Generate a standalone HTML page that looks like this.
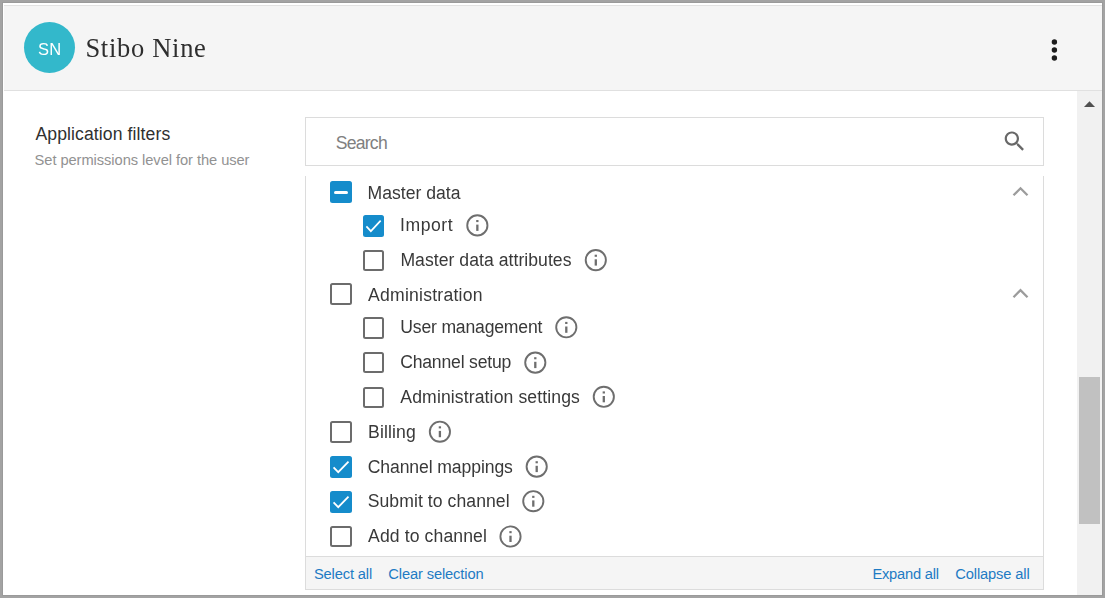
<!DOCTYPE html>
<html lang="en"><head><meta charset="utf-8"><title>Stibo Nine</title>
<style>
html,body{margin:0;padding:0;}
body{width:1105px;height:598px;overflow:hidden;background:#a3a3a3;position:relative;font-family:"Liberation Sans",sans-serif;}
.abs{position:absolute;}
.t{position:absolute;white-space:nowrap;line-height:24px;height:24px;}
#win{left:3px;top:3px;width:1099px;height:592px;background:#fff;overflow:hidden;box-shadow:0 0 0 1px #9a9a9a;}
#hdr{left:1px;top:2px;width:1098px;height:84px;background:#f5f5f5;border-top:1px solid #e2e2e2;border-bottom:1px solid #e0e0e0;}
#avatar{left:21px;top:19px;width:51px;height:51px;border-radius:50%;background:#33b8cb;}
.cb{position:absolute;box-sizing:border-box;border-radius:2.5px;}
.cb.off{border:2px solid #6c6c6c;background:#fff;}
.cb.on,.cb.ind{background:#158ccb;}
</style></head>
<body>
<div id="win" class="abs">
<div id="hdr" class="abs"></div>
<div id="avatar" class="abs"></div>
<svg class="abs" style="left:1045px;top:33px;" width="14" height="28" viewBox="0 0 14 28"><g fill="#1c1c1c"><circle cx="6.4" cy="6" r="2.7"/><circle cx="6.4" cy="13.95" r="2.7"/><circle cx="6.4" cy="22" r="2.7"/></g></svg>
<div class="abs" style="left:1074px;top:88px;width:25px;height:504px;background:#f1f1f1;"></div>
<svg class="abs" style="left:1074px;top:88px;" width="25" height="25" viewBox="0 0 25 25"><path d="M7 16 L12.5 10.3 L18 16 Z" fill="#505050"/></svg>
<div class="abs" style="left:1076px;top:374px;width:21px;height:147px;background:#c1c1c1;"></div>
<span class="t" id="appf" style='left:32.42px;top:119px;font-size:17.6px;color:#303030;letter-spacing:0.102px;'>Application filters</span>
<span class="t" id="setp" style='left:31.56px;top:145px;font-size:14.7px;color:#929292;letter-spacing:-0.066px;'>Set permissions level for the user</span>
<div class="abs" style="left:302px;top:114px;width:739px;height:49px;box-sizing:border-box;border:1px solid #dcdcdc;background:#fff;"></div>
<span class="t" id="search" style='left:332.65px;top:128px;font-size:17.6px;color:#808080;letter-spacing:-0.745px;'>Search</span>
<svg class="abs" style="left:998px;top:125px;" width="28" height="28" viewBox="0 0 28 28"><g transform="translate(0.4 0.1) scale(1.1)"><path fill="#686868" d="M15.5 14h-.79l-.28-.27C15.41 12.59 16 11.11 16 9.5 16 5.91 13.09 3 9.5 3S3 5.91 3 9.5 5.91 16 9.5 16c1.61 0 3.09-.59 4.23-1.57l.27.28v.79l5 4.99L20.49 19l-4.99-5zm-6 0C7.01 14 5 11.99 5 9.5S7.01 5 9.5 5 14 7.01 14 9.5 11.99 14 9.5 14z"/></g></svg>
<div class="abs" style="left:302px;top:173px;width:739px;height:414px;box-sizing:border-box;border-left:1px solid #dcdcdc;border-right:1px solid #dcdcdc;border-bottom:1px solid #dcdcdc;"></div>
<div class="abs" style="left:302px;top:553px;width:739px;height:34px;box-sizing:border-box;border:1px solid #dcdcdc;background:#f5f5f5;"></div>
<span class="t" id="lk0" style='left:310.98px;top:559px;font-size:14.7px;color:#1e7bc4;letter-spacing:-0.158px;'>Select all</span>
<span class="t" id="lk1" style='left:385.30px;top:559px;font-size:14.7px;color:#1e7bc4;letter-spacing:-0.131px;'>Clear selection</span>
<span class="t" id="lk2" style='left:869.38px;top:559px;font-size:14.7px;color:#1e7bc4;letter-spacing:-0.210px;'>Expand all</span>
<span class="t" id="lk3" style='left:952.34px;top:559px;font-size:14.7px;color:#1e7bc4;letter-spacing:-0.143px;'>Collapse all</span>
<div class="cb ind" style="left:327px;top:178px;width:22px;height:22px;"><div style="position:absolute;left:3.8px;top:10.1px;width:14.4px;height:3px;background:#fff;border-radius:1.5px"></div></div>
<svg class="abs" style="left:1006px;top:181px;" width="22" height="16" viewBox="0 0 22 16"><path d="M4.50 11.30 L11.50 4.30 L18.50 11.30" fill="none" stroke="#9c9c9c" stroke-width="2.3"/></svg>
<div class="cb on" style="left:360px;top:212px;width:21px;height:22px;"><svg width="21" height="22" viewBox="0 0 22 22" preserveAspectRatio="none" style="display:block"><path d="M3.56 11.35 L8.24 16.2 L18.5 5.7" fill="none" stroke="#fff" stroke-width="1.8"/></svg></div>
<svg class="abs" style="left:461px;top:209px;" width="26" height="26" viewBox="0 0 26 26"><g transform="translate(13.35 13.40)" fill="#6e6e6e"><circle r="10.1" fill="none" stroke="#6e6e6e" stroke-width="1.9"/><rect x="-1.15" y="-5.4" width="2.3" height="2.1"/><rect x="-1.15" y="-0.8" width="2.3" height="6.3"/></g></svg>
<div class="cb off" style="left:360px;top:247px;width:21px;height:21px;"></div>
<svg class="abs" style="left:579px;top:244px;" width="26" height="26" viewBox="0 0 26 26"><g transform="translate(13.80 13.10)" fill="#6e6e6e"><circle r="10.1" fill="none" stroke="#6e6e6e" stroke-width="1.9"/><rect x="-1.15" y="-5.4" width="2.3" height="2.1"/><rect x="-1.15" y="-0.8" width="2.3" height="6.3"/></g></svg>
<div class="cb off" style="left:327px;top:280px;width:22px;height:22px;"></div>
<svg class="abs" style="left:1006px;top:283px;" width="22" height="16" viewBox="0 0 22 16"><path d="M4.50 11.20 L11.50 4.20 L18.50 11.20" fill="none" stroke="#9c9c9c" stroke-width="2.3"/></svg>
<div class="cb off" style="left:360px;top:314px;width:21px;height:22px;"></div>
<svg class="abs" style="left:550px;top:311px;" width="26" height="26" viewBox="0 0 26 26"><g transform="translate(13.30 13.30)" fill="#6e6e6e"><circle r="10.1" fill="none" stroke="#6e6e6e" stroke-width="1.9"/><rect x="-1.15" y="-5.4" width="2.3" height="2.1"/><rect x="-1.15" y="-0.8" width="2.3" height="6.3"/></g></svg>
<div class="cb off" style="left:360px;top:349px;width:21px;height:21px;"></div>
<svg class="abs" style="left:519px;top:346px;" width="26" height="26" viewBox="0 0 26 26"><g transform="translate(13.30 13.60)" fill="#6e6e6e"><circle r="10.1" fill="none" stroke="#6e6e6e" stroke-width="1.9"/><rect x="-1.15" y="-5.4" width="2.3" height="2.1"/><rect x="-1.15" y="-0.8" width="2.3" height="6.3"/></g></svg>
<div class="cb off" style="left:360px;top:384px;width:21px;height:21px;"></div>
<svg class="abs" style="left:587px;top:380px;" width="26" height="26" viewBox="0 0 26 26"><g transform="translate(13.80 13.80)" fill="#6e6e6e"><circle r="10.1" fill="none" stroke="#6e6e6e" stroke-width="1.9"/><rect x="-1.15" y="-5.4" width="2.3" height="2.1"/><rect x="-1.15" y="-0.8" width="2.3" height="6.3"/></g></svg>
<div class="cb off" style="left:327px;top:418px;width:22px;height:22px;"></div>
<svg class="abs" style="left:423px;top:415px;" width="26" height="26" viewBox="0 0 26 26"><g transform="translate(13.90 13.70)" fill="#6e6e6e"><circle r="10.1" fill="none" stroke="#6e6e6e" stroke-width="1.9"/><rect x="-1.15" y="-5.4" width="2.3" height="2.1"/><rect x="-1.15" y="-0.8" width="2.3" height="6.3"/></g></svg>
<div class="cb on" style="left:327px;top:453px;width:22px;height:22px;"><svg width="22" height="22" viewBox="0 0 22 22" preserveAspectRatio="none" style="display:block"><path d="M3.56 11.35 L8.24 16.2 L18.5 5.7" fill="none" stroke="#fff" stroke-width="1.8"/></svg></div>
<svg class="abs" style="left:520px;top:450px;" width="26" height="26" viewBox="0 0 26 26"><g transform="translate(13.70 13.60)" fill="#6e6e6e"><circle r="10.1" fill="none" stroke="#6e6e6e" stroke-width="1.9"/><rect x="-1.15" y="-5.4" width="2.3" height="2.1"/><rect x="-1.15" y="-0.8" width="2.3" height="6.3"/></g></svg>
<div class="cb on" style="left:327px;top:488px;width:22px;height:22px;"><svg width="22" height="22" viewBox="0 0 22 22" preserveAspectRatio="none" style="display:block"><path d="M3.56 11.35 L8.24 16.2 L18.5 5.7" fill="none" stroke="#fff" stroke-width="1.8"/></svg></div>
<svg class="abs" style="left:517px;top:485px;" width="26" height="26" viewBox="0 0 26 26"><g transform="translate(13.30 13.20)" fill="#6e6e6e"><circle r="10.1" fill="none" stroke="#6e6e6e" stroke-width="1.9"/><rect x="-1.15" y="-5.4" width="2.3" height="2.1"/><rect x="-1.15" y="-0.8" width="2.3" height="6.3"/></g></svg>
<div class="cb off" style="left:327px;top:523px;width:22px;height:21px;"></div>
<svg class="abs" style="left:494px;top:520px;" width="26" height="26" viewBox="0 0 26 26"><g transform="translate(13.50 13.50)" fill="#6e6e6e"><circle r="10.1" fill="none" stroke="#6e6e6e" stroke-width="1.9"/><rect x="-1.15" y="-5.4" width="2.3" height="2.1"/><rect x="-1.15" y="-0.8" width="2.3" height="6.3"/></g></svg>
<div class="abs" id="gl" style="left:0;top:0;width:1099px;height:592px;will-change:transform;">
<span class="t" id="sn" style='left:34.93px;top:34px;font-size:16.5px;color:#fff;letter-spacing:0.269px;'>SN</span>
<span class="t" id="title" style='left:82.38px;top:33px;font-size:26.5px;color:#2e2e2e;letter-spacing:0.710px;font-family:"Liberation Serif",serif;'>Stibo Nine</span>
<span class="t" id="r0" style='left:364.62px;top:178px;font-size:17.6px;color:#393939;letter-spacing:0.004px;'>Master data</span>
<span class="t" id="r1" style='left:397.10px;top:210px;font-size:17.6px;color:#393939;letter-spacing:0.536px;'>Import</span>
<span class="t" id="r2" style='left:397.38px;top:245px;font-size:17.6px;color:#393939;letter-spacing:0.044px;'>Master data attributes</span>
<span class="t" id="r3" style='left:365.07px;top:280px;font-size:17.6px;color:#393939;letter-spacing:0.230px;'>Administration</span>
<span class="t" id="r4" style='left:397.32px;top:312px;font-size:17.6px;color:#393939;letter-spacing:-0.191px;'>User management</span>
<span class="t" id="r5" style='left:397.19px;top:347px;font-size:17.6px;color:#393939;letter-spacing:-0.197px;'>Channel setup</span>
<span class="t" id="r6" style='left:397.36px;top:382px;font-size:17.6px;color:#393939;letter-spacing:0.114px;'>Administration settings</span>
<span class="t" id="r7" style='left:365.01px;top:417px;font-size:17.6px;color:#393939;letter-spacing:0.150px;'>Billing</span>
<span class="t" id="r8" style='left:364.67px;top:452px;font-size:17.6px;color:#393939;letter-spacing:-0.099px;'>Channel mappings</span>
<span class="t" id="r9" style='left:364.73px;top:486px;font-size:17.6px;color:#393939;letter-spacing:0.066px;'>Submit to channel</span>
<span class="t" id="r10" style='left:365.07px;top:521px;font-size:17.6px;color:#393939;letter-spacing:0.109px;'>Add to channel</span>
</div>
</div>
</body></html>
